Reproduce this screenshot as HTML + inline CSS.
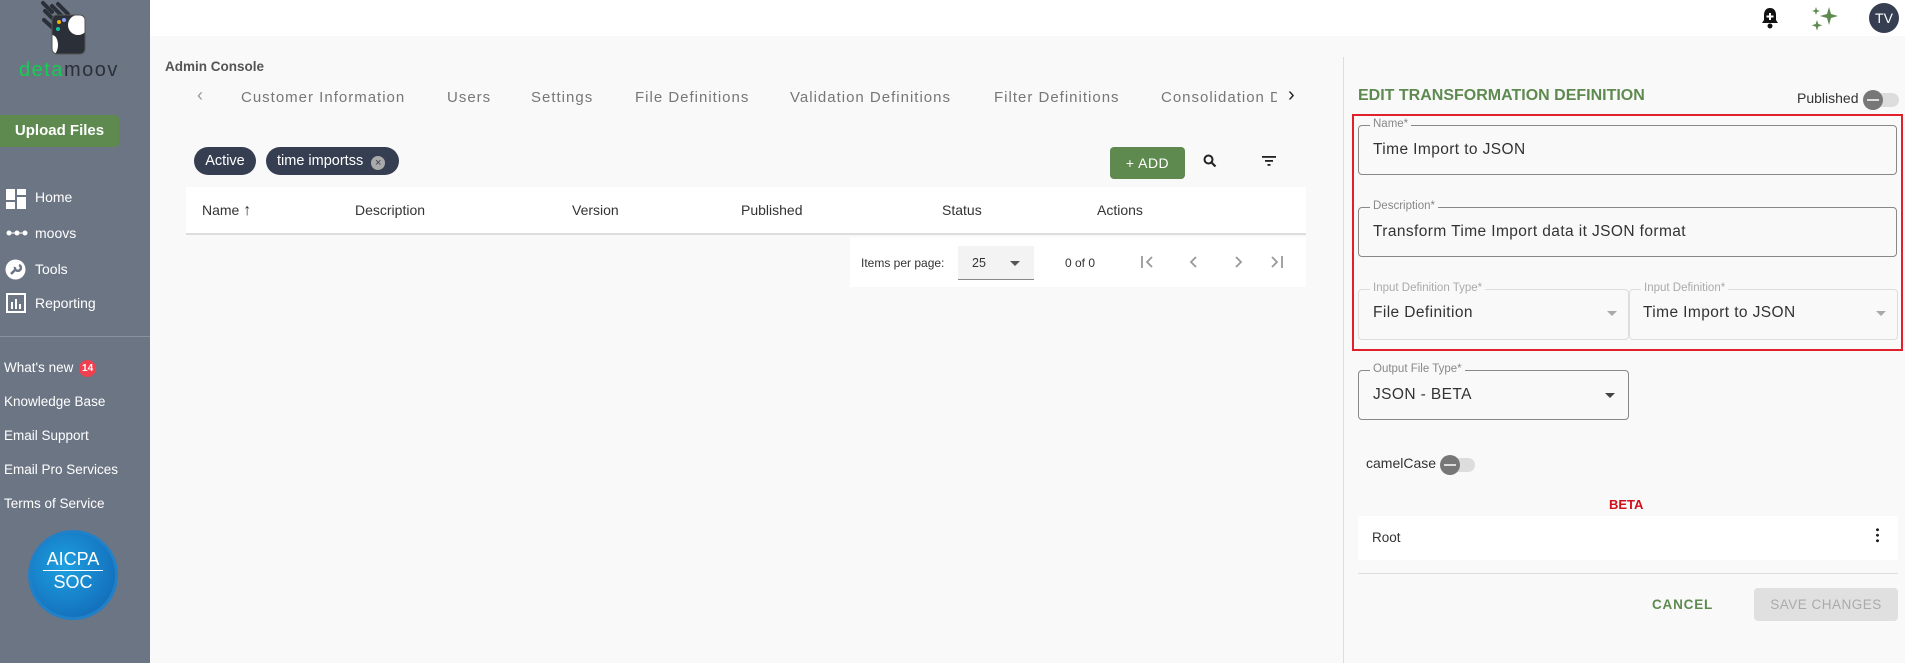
<!DOCTYPE html>
<html><head><meta charset="utf-8"><style>
*{box-sizing:border-box;margin:0;padding:0}
body{width:1905px;height:663px;overflow:hidden;background:#f9f9f9;font-family:"Liberation Sans",sans-serif;position:relative;color:#333}
.a{position:absolute;white-space:nowrap}
#sb{left:0;top:0;width:150px;height:663px;background:#6c7584}
.nav{color:#fff;font-size:14px;left:35px}
.lnk{color:#fff;font-size:13.5px;left:4px}
.tab{font-size:15px;color:#777;letter-spacing:1px;top:89px}
.th{font-size:14px;color:#333;top:202px}
.fs{border:1px solid #888;border-radius:4px}
.lbl{font-size:11.5px;color:#888;background:#f9f9f9;padding:0 3px}
.val{font-size:15.5px;color:#333;letter-spacing:.4px}
</style></head><body>
<div class="a" id="sb"></div>
<!-- logo -->
<svg class="a" style="left:38px;top:0" width="60" height="58" viewBox="0 0 60 58">
<defs><clipPath id="cp"><rect x="14" y="15" width="33" height="39" rx="5"/></clipPath></defs>
<g stroke="#2b3038" stroke-width="4" stroke-linecap="round"><line x1="5" y1="3" x2="14" y2="12"/><line x1="7" y1="11" x2="20" y2="24"/><line x1="14" y1="6" x2="24" y2="16"/><line x1="20" y1="4" x2="30" y2="14"/><line x1="6" y1="20" x2="16" y2="29"/></g>
<rect x="14" y="15" width="33" height="39" rx="5" fill="#2b3038"/>
<g clip-path="url(#cp)"><circle cx="40" cy="25" r="10" fill="#fff"/><ellipse cx="14" cy="45" rx="6" ry="10" fill="#fff"/></g>
<rect x="14" y="15" width="33" height="39" rx="5" fill="none" stroke="#555" stroke-width="1"/>
<circle cx="21" cy="22" r="2" fill="#f0b400"/><circle cx="26" cy="20" r="2" fill="#8aa0ff"/><circle cx="20" cy="29" r="2" fill="#10c0a0"/>
</svg>
<div class="a" style="left:19px;top:59px;font-size:20px;letter-spacing:1.5px"><span style="color:#10d050">deta</span><span style="color:#2b3038">moov</span></div>
<div class="a" style="left:0;top:115px;width:119px;height:32px;background:#5e8a50;border-radius:0 4px 4px 0;color:#fff;font-weight:bold;font-size:15px;text-align:center;line-height:32px">Upload Files</div>
<svg class="a" style="left:6px;top:189px" width="20" height="20"><rect x="0" y="0" width="9" height="11" fill="#fff"/><rect x="11" y="0" width="9" height="6" fill="#fff"/><rect x="0" y="13" width="9" height="7" fill="#fff"/><rect x="11" y="8" width="9" height="12" fill="#fff"/></svg>
<div class="a nav" style="top:189px">Home</div>
<svg class="a" style="left:6px;top:229px" width="22" height="8"><circle cx="3" cy="4" r="2.5" fill="#fff"/><circle cx="11" cy="4" r="2.5" fill="#fff"/><circle cx="19" cy="4" r="2.5" fill="#fff"/><line x1="3" y1="4" x2="19" y2="4" stroke="#fff"/></svg>
<div class="a nav" style="top:225px">moovs</div>
<svg class="a" style="left:5px;top:259px" width="21" height="21"><circle cx="10.5" cy="10.5" r="10" fill="#fff"/><path d="M6 15l5-5M10 8a3 3 0 1 0 4-2" stroke="#6c7584" stroke-width="2.5" fill="none"/></svg>
<div class="a nav" style="top:261px">Tools</div>
<svg class="a" style="left:6px;top:293px" width="20" height="20"><rect x="1" y="1" width="18" height="18" fill="none" stroke="#fff" stroke-width="2"/><rect x="5" y="9" width="2" height="7" fill="#fff"/><rect x="9" y="6" width="2" height="10" fill="#fff"/><rect x="13" y="11" width="2" height="5" fill="#fff"/></svg>
<div class="a nav" style="top:295px">Reporting</div>
<div class="a" style="left:0;top:336px;width:150px;height:1px;background:#8a919d"></div>
<div class="a lnk" style="top:360px">What's new <span style="display:inline-block;background:#f04050;border-radius:50%;width:17px;height:17px;text-align:center;line-height:17px;font-size:10px;font-weight:bold;margin-left:2px;vertical-align:1px">14</span></div>
<div class="a lnk" style="top:394px">Knowledge Base</div>
<div class="a lnk" style="top:428px">Email Support</div>
<div class="a lnk" style="top:462px">Email Pro Services</div>
<div class="a lnk" style="top:496px">Terms of Service</div>
<div class="a" style="left:28px;top:530px;width:90px;height:90px;border-radius:50%;background:radial-gradient(circle at 40% 40%,#1ea0e0,#1060b0);border:3px solid #2080c8"></div>
<div class="a" style="left:28px;top:548px;width:90px;text-align:center;color:#fff;font-size:18px;line-height:22px">AICPA<br><span style="display:block;border-top:1px solid #fff;width:60px;margin:0 auto">SOC</span></div>
<!-- topbar -->
<div class="a" style="left:150px;top:0;width:1755px;height:36px;background:#fff"></div>
<svg class="a" style="left:1761px;top:7px" width="18" height="22" viewBox="0 0 18 22"><path d="M9 1c-4 0-6 3-6 7v5l-2 3h16l-2-3V8c0-4-2-7-6-7z" fill="#111"/><circle cx="9" cy="19" r="2.5" fill="#111"/><path d="M9 6v7M5.5 9.5h7" stroke="#fff" stroke-width="2"/></svg>
<svg class="a" style="left:1810px;top:5px" width="30" height="26" viewBox="0 0 30 26"><path d="M19 2l2 7 7 2-7 2-2 7-2-7-7-2 7-2z" fill="#5e8a50"/><path d="M6 2l1 3 3 1-3 1-1 3-1-3-3-1 3-1z" fill="#5e8a50"/><path d="M7 15l1.3 4 4 1.3-4 1.3-1.3 4-1.3-4-4-1.3 4-1.3z" fill="#5e8a50"/></svg>
<div class="a" style="left:1869px;top:3px;width:30px;height:30px;border-radius:50%;background:#363f52;color:#fff;font-size:14px;text-align:center;line-height:30px">TV</div>
<!-- main -->
<div class="a" style="left:165px;top:59px;font-size:13.5px;font-weight:bold;color:#555">Admin Console</div>
<div class="a tab" style="left:197px;font-size:18px;top:85px;color:#999">&#8249;</div>
<div class="a tab" style="left:241px">Customer Information</div>
<div class="a tab" style="left:447px">Users</div>
<div class="a tab" style="left:531px">Settings</div>
<div class="a tab" style="left:635px">File Definitions</div>
<div class="a tab" style="left:790px">Validation Definitions</div>
<div class="a tab" style="left:994px">Filter Definitions</div>
<div class="a tab" style="left:1161px;width:116px;overflow:hidden">Consolidation Definitions</div>
<div class="a" style="left:1288px;top:84px;font-size:20px;color:#222">&#8250;</div>
<div class="a" style="left:194px;top:147px;width:62px;height:28px;background:#363f52;border-radius:14px;color:#fff;font-size:14.5px;line-height:28px;text-align:center">Active</div>
<div class="a" style="left:266px;top:147px;width:133px;height:28px;background:#363f52;border-radius:14px;color:#fff;font-size:14.5px;line-height:28px;padding-left:11px">time importss <span style="display:inline-block;width:14px;height:14px;border-radius:50%;background:#aaa;color:#363f52;font-size:11px;line-height:14px;text-align:center;margin-left:4px;vertical-align:-1px">×</span></div>
<div class="a" style="left:1110px;top:147px;width:75px;height:32px;background:#5e8a50;border-radius:4px;color:#fff;font-size:14px;text-align:center;line-height:32px;letter-spacing:.5px">+ ADD</div>
<svg class="a" style="left:1203px;top:154px" width="14" height="14"><circle cx="5.5" cy="5.5" r="4" stroke="#222" stroke-width="2" fill="none"/><line x1="8.5" y1="8.5" x2="12.5" y2="12.5" stroke="#222" stroke-width="2.2"/></svg>
<svg class="a" style="left:1262px;top:156px" width="14" height="10"><rect x="0" y="0" width="14" height="1.8" fill="#222"/><rect x="3" y="4" width="8" height="1.8" fill="#222"/><rect x="5.5" y="8" width="3" height="1.8" fill="#222"/></svg>
<div class="a" style="left:186px;top:187px;width:1120px;height:48px;background:#fff;border-bottom:2px solid #ddd"></div>
<div class="a th" style="left:202px">Name <b style="font-size:16px">&#8593;</b></div>
<div class="a th" style="left:355px">Description</div>
<div class="a th" style="left:572px">Version</div>
<div class="a th" style="left:741px">Published</div>
<div class="a th" style="left:942px">Status</div>
<div class="a th" style="left:1097px">Actions</div>
<div class="a" style="left:850px;top:237px;width:456px;height:50px;background:#fff"></div>
<div class="a" style="left:861px;top:256px;font-size:12px;color:#333">Items per page:</div>
<div class="a" style="left:958px;top:246px;width:76px;height:34px;background:#f3f3f3;border-bottom:1px solid #888;font-size:12.5px;padding:10px 0 0 14px">25<span style="position:absolute;left:52px;top:15px;border:5px solid transparent;border-top-color:#555"></span></div>
<div class="a" style="left:1065px;top:256px;font-size:12px;color:#333">0 of 0</div>
<svg class="a" style="left:1140px;top:255px" width="160" height="14" stroke="#999" stroke-width="1.8" fill="none">
<path d="M2 1v12M12 2l-5 5 5 5"/><path d="M56 2l-5 5 5 5"/><path d="M96 2l5 5-5 5"/><path d="M132 2l5 5-5 5M142 1v12"/></svg>
<!-- right panel -->
<div class="a" style="left:1343px;top:57px;width:1px;height:606px;background:#ddd"></div>
<div class="a" style="left:1358px;top:87px;font-size:16px;font-weight:bold;color:#5e8a50">EDIT TRANSFORMATION DEFINITION</div>
<div class="a" style="left:1797px;top:90px;font-size:14px;color:#333">Published</div>
<div class="a" style="left:1868px;top:93px;width:31px;height:14px;border-radius:7px;background:#ddd"></div>
<div class="a" style="left:1863px;top:90px;width:20px;height:20px;border-radius:50%;background:#777"><div style="margin:9px 4px;height:2px;background:#ddd"></div></div>
<div class="a" style="left:1352px;top:114px;width:551px;height:237px;border:2.5px solid #e0202a"></div>
<div class="a fs" style="left:1358px;top:125px;width:539px;height:50px"></div>
<div class="a lbl" style="left:1370px;top:118px">Name*</div>
<div class="a val" style="left:1373px;top:141px">Time Import to JSON</div>
<div class="a fs" style="left:1358px;top:207px;width:539px;height:50px"></div>
<div class="a lbl" style="left:1370px;top:200px">Description*</div>
<div class="a val" style="left:1373px;top:223px">Transform Time Import data it JSON format</div>
<div class="a fs" style="left:1358px;top:289px;width:271px;height:51px;border-color:#ddd"></div>
<div class="a lbl" style="left:1370px;top:282px;color:#aaa">Input Definition Type*</div>
<div class="a val" style="left:1373px;top:304px">File Definition</div>
<div class="a" style="left:1607px;top:311px;border:5px solid transparent;border-top-color:#aaa"></div>
<div class="a fs" style="left:1629px;top:289px;width:269px;height:51px;border-color:#ddd"></div>
<div class="a lbl" style="left:1641px;top:282px;color:#aaa">Input Definition*</div>
<div class="a val" style="left:1643px;top:304px">Time Import to JSON</div>
<div class="a" style="left:1876px;top:311px;border:5px solid transparent;border-top-color:#aaa"></div>
<div class="a fs" style="left:1358px;top:370px;width:271px;height:50px"></div>
<div class="a lbl" style="left:1370px;top:363px">Output File Type*</div>
<div class="a val" style="left:1373px;top:386px">JSON - BETA</div>
<div class="a" style="left:1605px;top:393px;border:5px solid transparent;border-top-color:#444"></div>
<div class="a" style="left:1366px;top:455px;font-size:14px;color:#333">camelCase</div>
<div class="a" style="left:1444px;top:458px;width:31px;height:14px;border-radius:7px;background:#ddd"></div>
<div class="a" style="left:1440px;top:455px;width:20px;height:20px;border-radius:50%;background:#777"><div style="margin:9px 4px;height:2px;background:#ddd"></div></div>
<div class="a" style="left:1609px;top:497px;font-size:13px;font-weight:bold;color:#d0101a">BETA</div>
<div class="a" style="left:1358px;top:516px;width:540px;height:44px;background:#fff"></div>
<div class="a" style="left:1372px;top:530px;font-size:13.5px;color:#333">Root</div>
<div class="a" style="left:1876px;top:527px;width:3px;height:16px;background:radial-gradient(circle,#222 1.4px,transparent 1.6px) 0 0/3px 5.5px"></div>
<div class="a" style="left:1358px;top:573px;width:540px;height:1px;background:#ddd"></div>
<div class="a" style="left:1652px;top:597px;font-size:13.5px;font-weight:bold;color:#5e8a50;letter-spacing:.8px">CANCEL</div>
<div class="a" style="left:1754px;top:588px;width:144px;height:33px;background:#e0e0e0;border-radius:4px;color:#aaa;font-size:13.5px;text-align:center;line-height:33px;letter-spacing:.5px">SAVE CHANGES</div>
</body></html>
